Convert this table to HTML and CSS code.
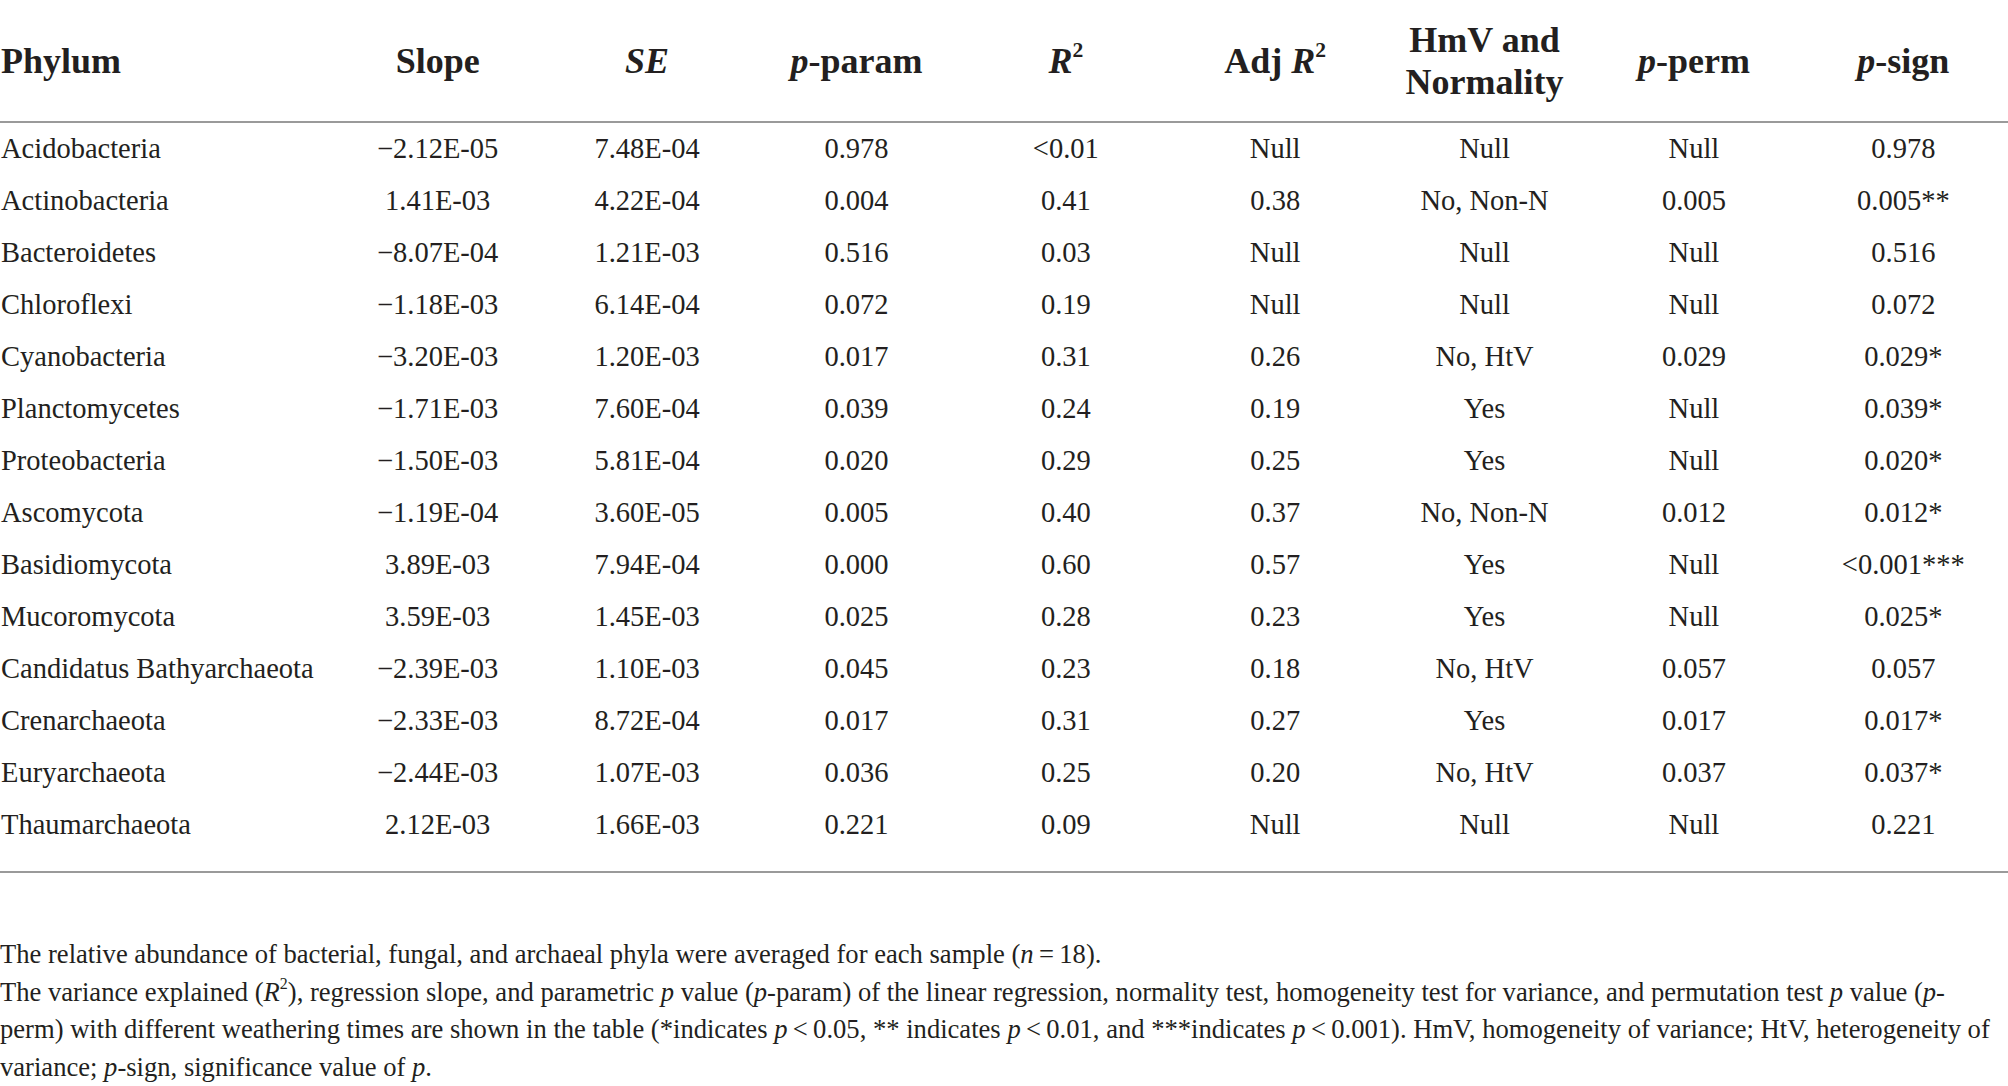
FILE: index.html
```html
<!DOCTYPE html>
<html lang="en">
<head>
  <meta charset="UTF-8">
  <title>Phylum regression table</title>
  <link rel="stylesheet" href="styles.css">
</head>
<body>
  <div class="table-box">
    <table class="phyla">
      <colgroup>
        <col class="col-name">
        <col span="8">
      </colgroup>
      <thead>
        <tr>
          <th class="name">Phylum</th>
          <th>Slope</th>
          <th><i>SE</i></th>
          <th><i>p</i>-param</th>
          <th><i>R</i><sup>2</sup></th>
          <th>Adj <i>R</i><sup>2</sup></th>
          <th>HmV and<br>Normality</th>
          <th><i>p</i>-perm</th>
          <th><i>p</i>-sign</th>
        </tr>
      </thead>
      <tbody>
        <tr><td class="name">Acidobacteria</td><td>−2.12E-05</td><td>7.48E-04</td><td>0.978</td><td>&lt;0.01</td><td>Null</td><td>Null</td><td>Null</td><td>0.978</td></tr>
        <tr><td class="name">Actinobacteria</td><td>1.41E-03</td><td>4.22E-04</td><td>0.004</td><td>0.41</td><td>0.38</td><td>No, Non-N</td><td>0.005</td><td>0.005**</td></tr>
        <tr><td class="name">Bacteroidetes</td><td>−8.07E-04</td><td>1.21E-03</td><td>0.516</td><td>0.03</td><td>Null</td><td>Null</td><td>Null</td><td>0.516</td></tr>
        <tr><td class="name">Chloroflexi</td><td>−1.18E-03</td><td>6.14E-04</td><td>0.072</td><td>0.19</td><td>Null</td><td>Null</td><td>Null</td><td>0.072</td></tr>
        <tr><td class="name">Cyanobacteria</td><td>−3.20E-03</td><td>1.20E-03</td><td>0.017</td><td>0.31</td><td>0.26</td><td>No, HtV</td><td>0.029</td><td>0.029*</td></tr>
        <tr><td class="name">Planctomycetes</td><td>−1.71E-03</td><td>7.60E-04</td><td>0.039</td><td>0.24</td><td>0.19</td><td>Yes</td><td>Null</td><td>0.039*</td></tr>
        <tr><td class="name">Proteobacteria</td><td>−1.50E-03</td><td>5.81E-04</td><td>0.020</td><td>0.29</td><td>0.25</td><td>Yes</td><td>Null</td><td>0.020*</td></tr>
        <tr><td class="name">Ascomycota</td><td>−1.19E-04</td><td>3.60E-05</td><td>0.005</td><td>0.40</td><td>0.37</td><td>No, Non-N</td><td>0.012</td><td>0.012*</td></tr>
        <tr><td class="name">Basidiomycota</td><td>3.89E-03</td><td>7.94E-04</td><td>0.000</td><td>0.60</td><td>0.57</td><td>Yes</td><td>Null</td><td>&lt;0.001***</td></tr>
        <tr><td class="name">Mucoromycota</td><td>3.59E-03</td><td>1.45E-03</td><td>0.025</td><td>0.28</td><td>0.23</td><td>Yes</td><td>Null</td><td>0.025*</td></tr>
        <tr><td class="name">Candidatus Bathyarchaeota</td><td>−2.39E-03</td><td>1.10E-03</td><td>0.045</td><td>0.23</td><td>0.18</td><td>No, HtV</td><td>0.057</td><td>0.057</td></tr>
        <tr><td class="name">Crenarchaeota</td><td>−2.33E-03</td><td>8.72E-04</td><td>0.017</td><td>0.31</td><td>0.27</td><td>Yes</td><td>0.017</td><td>0.017*</td></tr>
        <tr><td class="name">Euryarchaeota</td><td>−2.44E-03</td><td>1.07E-03</td><td>0.036</td><td>0.25</td><td>0.20</td><td>No, HtV</td><td>0.037</td><td>0.037*</td></tr>
        <tr><td class="name">Thaumarchaeota</td><td>2.12E-03</td><td>1.66E-03</td><td>0.221</td><td>0.09</td><td>Null</td><td>Null</td><td>Null</td><td>0.221</td></tr>
      </tbody>
    </table>
  </div>

  <div class="notes">
    <p>The relative abundance of bacterial, fungal, and archaeal phyla were averaged for each sample (<i>n</i>&thinsp;=&thinsp;18).</p>
    <p>The variance explained (<i>R</i><sup>2</sup>), regression slope, and parametric <i>p</i> value (<i>p</i>-param) of the linear regression, normality test, homogeneity test for variance, and permutation test <i>p</i> value (<i>p</i>-<br>perm) with different weathering times are shown in the table (*indicates <i>p</i>&thinsp;&lt;&thinsp;0.05, ** indicates <i>p</i>&thinsp;&lt;&thinsp;0.01, and ***indicates <i>p</i>&thinsp;&lt;&thinsp;0.001). HmV, homogeneity of variance; HtV, heterogeneity of<br>variance; <i>p</i>-sign, significance value of <i>p</i>.</p>
  </div>
</body>
</html>
```

FILE: styles.css
```css
body {
  margin: 0;
  background: #fff;
  color: #231f20;
  font-family: "Liberation Serif", "Times New Roman", serif;
}

.table-box {
  width: 2008px;
  padding-bottom: 20px;
  border-bottom: 2px solid #9a9a9a;
}

.phyla {
  width: 2008px;
  table-layout: fixed;
  border-collapse: collapse;
}

.col-name {
  width: 333px;
}

.phyla th {
  height: 121px;
  padding: 0;
  font-size: 36px;
  line-height: 42px;
  font-weight: bold;
  text-align: center;
  vertical-align: middle;
  border-bottom: 2px solid #9a9a9a;
}

.phyla td {
  height: 52px;
  padding: 0;
  font-size: 28.5px;
  line-height: 32px;
  text-align: center;
  vertical-align: middle;
  white-space: nowrap;
}

.phyla .name {
  text-align: left;
  padding-left: 1px;
}

sup {
  font-size: 0.6em;
  font-style: normal;
  line-height: 0;
  vertical-align: 0.75em;
}

.notes {
  margin-top: 63px;
  font-size: 26.6px;
  line-height: 37.5px;
}

.notes p {
  margin: 0;
  white-space: nowrap;
}
```
